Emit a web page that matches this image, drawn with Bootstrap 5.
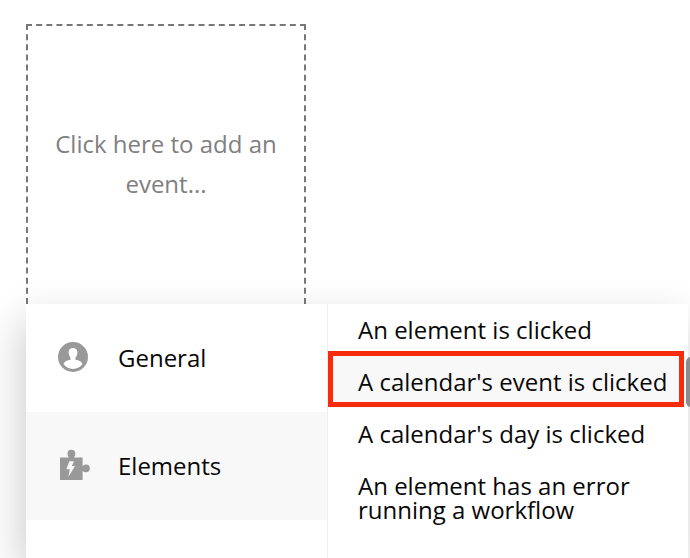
<!DOCTYPE html>
<html lang="en">
<head>
<meta charset="utf-8">
<meta name="viewport" content="width=device-width, initial-scale=1">
<title>Workflow events</title>
<link href="https://cdn.jsdelivr.net/npm/bootstrap@5.3.0/dist/css/bootstrap.min.css" rel="stylesheet">
<style>
body { font-family: "Open Sans", "Noto Sans", sans-serif; font-size: 24px; line-height: 24px; color: #080808; background: #fff; }
.workspace { padding: 24px 2px 0 26px; }
.add-event { width: 280px; padding: 98px 16px 100px; border: 2px dashed #777; border-bottom: 0; line-height: 40px; color: #808080; background: none; }
.event-menu { background: #fff; box-shadow: -4px 16px 40px rgba(0, 0, 0, .2); }
.categories { width: 302px; border-right: 1px solid #eee; }
.category { padding: 42px 32px; gap: 30px; border: 0; background: none; color: inherit; }
.category svg { width: 30px; height: 30px; margin: -4px 0 -2px; overflow: visible; }
.event-item { padding: 14px 16px 14px 30px; border: 0; background: none; color: inherit; }
.category.chosen, .event-item.chosen { background: #f8f8f8; }
.marker { inset: -5px 4px 1px 0; border: 5px solid #f72c0d; pointer-events: none; }
.scroll-thumb { top: 53px; right: -8px; width: 10px; height: 50px; border-radius: 5px; background: #8c8c8c; }
</style>
<script src="https://cdn.jsdelivr.net/npm/bootstrap@5.3.0/dist/js/bootstrap.bundle.min.js" defer></script>
</head>
<body>
<main class="workspace d-flex flex-column align-items-stretch vh-100 overflow-hidden">
  <button type="button" class="add-event text-center flex-shrink-0">Click here to add an event...</button>
  <div class="event-menu d-flex flex-grow-1 position-relative">
    <nav class="categories flex-shrink-0" aria-label="Event categories">
      <button type="button" class="category d-flex align-items-center w-100 text-start">
        <svg viewBox="0 0 30 30" aria-hidden="true"><circle cx="15" cy="15" r="15" fill="#999"/><path fill="#fff" d="M15 6C11.700 6 10.400 8.500 10.700 11.300C10.900 13.500 11.700 14.600 12.500 15.400V17.800C9 18.200 6 19.600 5.600 22.300C8 25.600 11.200 26.900 15 26.900S22 25.600 24.400 22.300C24 19.600 21 18.200 17.500 17.800V15.400C18.300 14.600 19.100 13.500 19.300 11.300C19.600 8.500 18.300 6 15 6Z"/></svg>
        <span>General</span>
      </button>
      <button type="button" class="category chosen d-flex align-items-center w-100 text-start">
        <svg viewBox="0 0 30 30" aria-hidden="true"><g fill="#999"><path d="M2 7.500H10.800V5H16V7.500H24.600V16H27V21H24.600V30H2Z"/><circle cx="13.400" cy="3.700" r="3.900"/><circle cx="28" cy="18.400" r="3.800"/></g><path fill="#f8f8f8" d="M11.400 11.200H16L13.800 16H17L10.400 27L11.800 19.300H8.400Z"/></svg>
        <span>Elements</span>
      </button>
    </nav>
    <div class="flex-grow-1">
      <button type="button" class="event-item d-block w-100 text-start">An element is clicked</button>
      <div class="position-relative">
        <button type="button" class="event-item chosen d-block w-100 text-start text-nowrap">A calendar's event is clicked</button>
        <span class="marker position-absolute"></span>
      </div>
      <button type="button" class="event-item d-block w-100 text-start">A calendar's day is clicked</button>
      <button type="button" class="event-item d-block w-100 text-start">An element has an error running a workflow</button>
    </div>
    <span class="scroll-thumb position-absolute"></span>
  </div>
</main>
</body>
</html>
